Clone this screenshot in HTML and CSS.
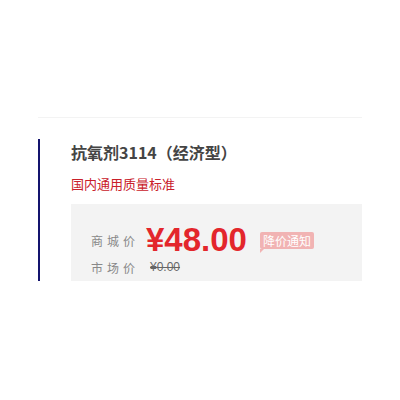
FILE: index.html
```html
<!DOCTYPE html>
<html lang="zh-CN">
    <head>
        <meta charset="UTF-8" />
        <meta name="viewport" content="width=device-width, initial-scale=1.0" />
        <title>抗氧剂3114（经济型）</title>
        <link rel="stylesheet" href="styles.css">
    </head>
    <body>
        <div id="wrapper">
            <div class="product">
                <div class="name">抗氧剂3114（经济型）</div>
                <div class="standard">国内通用质量标准</div>
                <div class="price-box">
                    <div class="row">
                        <span class="label">商城价</span>
                        <span class="price">¥48.00</span>
                        <span class="notice">降价通知</span>
                    </div>
                    <div class="row">
                        <span class="label">市场价</span>
                        <span class="old-price">¥0.00</span>
                    </div>
                </div>
            </div>
        </div>
    </body>
</html>
```

FILE: styles.css
```css
body {
    margin: 0;
    background-color: #fff;
    font-family: "Noto Sans CJK SC", "Noto Sans", sans-serif;
}
#wrapper {
    margin: 117px 38px 0;
    border-top: 1px solid #f3f3f3;
    padding-top: 21px;
}
.product {
    border-left: 2px solid #14146e;
    padding-left: 31px;
}
.name {
    font-size: 16px;
    font-weight: bold;
    line-height: 26px;
    color: #444;
}
.standard {
    margin-top: 9px;
    font-size: 13px;
    line-height: 20px;
    color: #c9202a;
}
.price-box {
    margin-top: 10px;
    background-color: #f3f3f3;
    padding: 19px 0 4px 20px;
}
.row {
    display: flex;
    align-items: center;
}
.row:first-child {
    height: 34px;
}
.row:last-child {
    height: 20px;
}
.label {
    width: 55px;
    font-size: 12px;
    letter-spacing: 4px;
    color: #888;
}
.price {
    font-family: "Liberation Sans", Arial, sans-serif;
    font-size: 33px;
    font-weight: bold;
    color: #e3262c;
}
.notice {
    position: relative;
    margin-left: 13px;
    padding: 0 3px;
    line-height: 17px;
    font-size: 12px;
    color: #fff;
    background-color: #f1b3b3;
    border-radius: 2px;
}
.notice::after {
    content: "";
    position: absolute;
    left: 0;
    bottom: -4px;
    border-top: 4px solid #f1b3b3;
    border-right: 4px solid transparent;
}
.old-price {
    margin-left: 4px;
    font-family: "Liberation Sans", Arial, sans-serif;
    font-size: 12px;
    color: #666;
    text-decoration: line-through;
}
```
